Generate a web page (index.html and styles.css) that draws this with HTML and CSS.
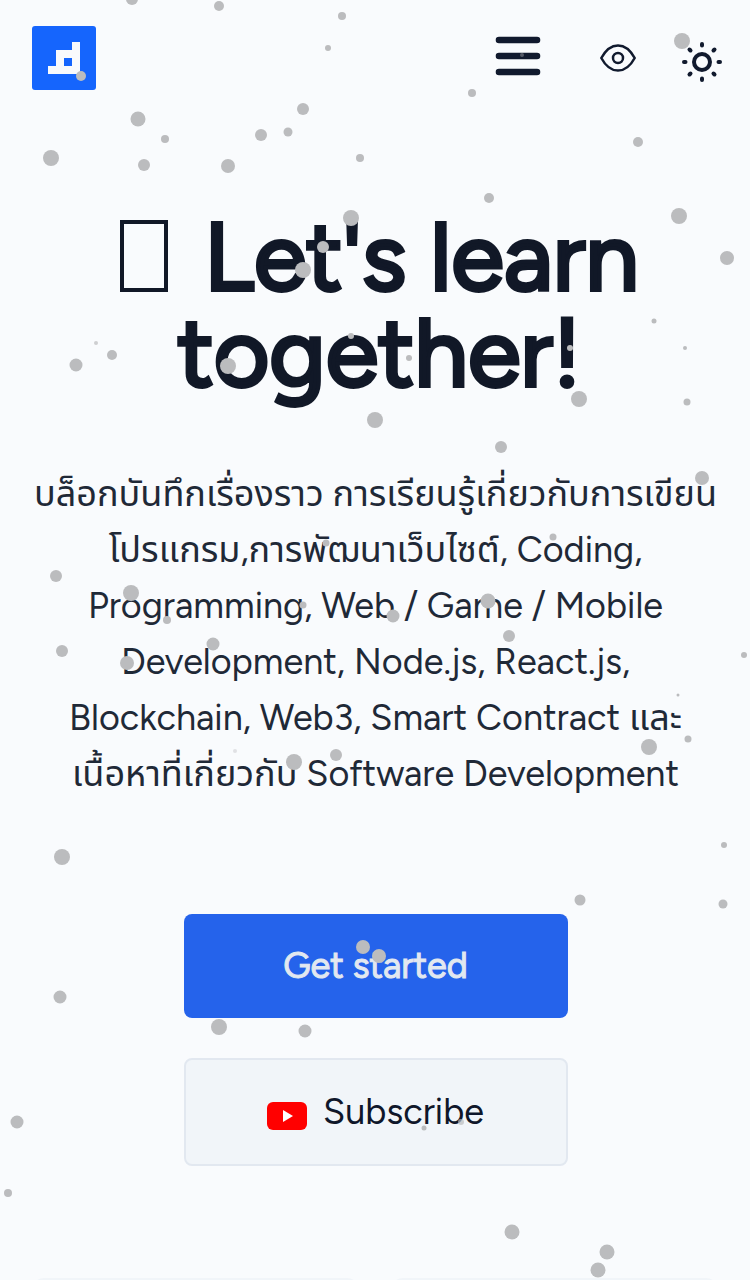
FILE: index.html
```html
<!DOCTYPE html>
<html lang="th">
<head>
<meta charset="utf-8">
<meta name="viewport" content="width=device-width, initial-scale=1">
<title>Let's learn together!</title>
<link rel="stylesheet" href="styles.css">
</head>
<body>
<header class="header">
  <a class="logo" href="#" aria-label="Home">
    <svg viewBox="0 0 64 64"><path fill="#f9fafc" fill-rule="evenodd" d="M40 16h8v32H16v-8h8V24h16zM32 32v8h8v-8z"/></svg>
  </a>
  <nav class="tools">
    <button class="tool tool-menu" type="button" aria-label="Menu">
      <svg class="icon-menu" viewBox="0 0 46 40"><path d="M4 4h38M4 20h38M4 36h38" stroke-width="6.6"/></svg>
    </button>
    <button class="tool" type="button" aria-label="View">
      <svg class="icon-eye" viewBox="0 0 36 28"><path d="M1.3 14C4 9 9 1.4 18 1.4S32 9 34.7 14C32 19 27 26.600 18 26.600S4 19 1.300 14z" stroke-width="2.500"/><circle cx="18" cy="14" r="5" stroke-width="2.500"/></svg>
    </button>
    <button class="tool tool-sun" type="button" aria-label="Theme">
      <svg class="icon-sun" viewBox="0 0 40 40"><circle cx="20" cy="20" r="8" stroke-width="4"/><path stroke-width="4" d="M20 2v1.500M20 36.500V38M2 20h1.500M36.500 20H38M7.500 7.500l1 1M31.500 31.500l1 1M7.500 32.500l1-1M31.500 8.500l1-1"/></svg>
    </button>
  </nav>
</header>
<main>
  <section class="hero">
    <h1 class="title"><span class="glyph-box"></span> Let's learn<br>together!</h1>
    <p class="lead">บล็อกบันทึกเรื่องราว การเรียนรู้เกี่ยวกับการเขียน<br>โปรแกรม,การพัฒนาเว็บไซต์, Coding,<br>Programming, Web / Game / Mobile<br>Development, Node.js, React.js,<br>Blockchain, Web3, Smart Contract และ<br>เนื้อหาที่เกี่ยวกับ Software Development</p>
    <div class="actions">
      <a class="btn btn-primary" href="#">Get started</a>
      <a class="btn btn-secondary" href="#">
        <svg class="icon-youtube" viewBox="0 0 40 28"><rect width="40" height="28" rx="6" fill="#f00"/><path d="M16 8l10 6-10 6z" fill="#fff"/></svg>
        Subscribe
      </a>
    </div>
  </section>
  <section class="cards">
    <div class="card"></div>
    <div class="card"></div>
  </section>
</main>
<svg class="particles" aria-hidden="true">
  <circle cx="132" cy="-1" r="6"/><circle cx="219" cy="6" r="5"/><circle cx="342" cy="16" r="4"/><circle cx="328" cy="48" r="3"/>
  <circle cx="81" cy="76" r="5"/><circle cx="138" cy="119" r="7.500"/><circle cx="165" cy="139" r="4"/><circle cx="51" cy="158" r="8"/>
  <circle cx="144" cy="165" r="6"/><circle cx="228" cy="166" r="7"/><circle cx="261" cy="135" r="6"/><circle cx="288" cy="132" r="4.500"/>
  <circle cx="303" cy="109" r="6"/><circle cx="360" cy="158" r="4"/><circle cx="472" cy="93" r="4"/><circle cx="522" cy="55" r="2" opacity=".4"/>
  <circle cx="682" cy="41" r="8"/><circle cx="638" cy="142" r="5"/><circle cx="489" cy="198" r="5"/><circle cx="679" cy="216" r="8"/>
  <circle cx="727" cy="258" r="7"/><circle cx="351" cy="218" r="8"/><circle cx="323" cy="247" r="6"/><circle cx="303" cy="270" r="8"/>
  <circle cx="654" cy="321" r="2.500"/><circle cx="685" cy="348" r="2"/><circle cx="687" cy="402" r="3.500"/><circle cx="579" cy="399" r="8"/>
  <circle cx="570" cy="348" r="3"/><circle cx="409" cy="358" r="3"/><circle cx="351" cy="336" r="3"/><circle cx="228" cy="366" r="8"/>
  <circle cx="112" cy="355" r="5"/><circle cx="96" cy="343" r="2" opacity=".7"/><circle cx="76" cy="365" r="6.500"/><circle cx="375" cy="420" r="8"/>
  <circle cx="501" cy="447" r="6"/><circle cx="702" cy="478" r="7"/><circle cx="553" cy="537" r="3.500"/><circle cx="326" cy="543" r="3.500"/>
  <circle cx="56" cy="576" r="6"/><circle cx="131" cy="593" r="8"/><circle cx="167" cy="620" r="4"/><circle cx="303" cy="605" r="3.500"/>
  <circle cx="393" cy="616" r="6.500"/><circle cx="488" cy="601" r="7.500"/><circle cx="509" cy="636" r="6"/><circle cx="213" cy="644" r="6.500"/>
  <circle cx="62" cy="651" r="6"/><circle cx="127" cy="663" r="7"/><circle cx="744" cy="655" r="3"/><circle cx="678" cy="695" r="1.500"/>
  <circle cx="688" cy="739" r="3.500"/><circle cx="649" cy="747" r="8"/><circle cx="235" cy="751" r="2" opacity=".4"/><circle cx="336" cy="755" r="6"/>
  <circle cx="294" cy="762" r="8"/><circle cx="62" cy="857" r="8"/><circle cx="724" cy="845" r="3"/><circle cx="580" cy="900" r="5.500"/>
  <circle cx="723" cy="904" r="4.500"/><circle cx="363" cy="947" r="7"/><circle cx="379" cy="956" r="7"/><circle cx="60" cy="997" r="6.500"/>
  <circle cx="219" cy="1027" r="8"/><circle cx="305" cy="1031" r="6.500"/><circle cx="424" cy="1128" r="2.500"/><circle cx="461" cy="1122" r="3" opacity=".7"/>
  <circle cx="17" cy="1122" r="6.500"/><circle cx="8" cy="1193" r="4"/><circle cx="512" cy="1232" r="7.500"/><circle cx="607" cy="1252" r="7.500"/><circle cx="598" cy="1270" r="7.500"/>
</svg>
</body>
</html>
```
FILE: styles.css
```css
* { box-sizing: border-box; }
body {
  margin: 0;
  height: 100vh;
  position: relative;
  overflow: hidden;
  background: #f9fbfd;
  color: #111827;
  font-family: Figtree, Lato, "Noto Sans Thai", "Noto Sans", sans-serif;
}
.header {
  display: flex;
  justify-content: space-between;
  align-items: center;
  padding: 26px 28px 26px 32px;
}
.logo { width: 64px; height: 64px; border-radius: 3px; background: #1565fd; }
.tools { display: flex; align-items: center; gap: 59px; }
.tool { display: flex; padding: 0; border: 0; background: none; color: #111a2e; }
.tool-menu { margin-bottom: 4px; }
.tool-sun { margin: 8px 0 0 -13px; }
svg { display: block; }
.tool svg { fill: none; stroke: currentColor; stroke-linecap: round; stroke-linejoin: round; }
.icon-menu { width: 46px; height: 40px; }
.icon-eye { width: 36px; height: 28px; }
.icon-sun { width: 40px; height: 40px; }
.hero {
  display: flex;
  flex-direction: column;
  align-items: center;
  padding: 93px 31px 112px 32px;
  text-align: center;
}
.title { margin: 0; padding-left: 8px; font-size: 96px; line-height: 96px; font-weight: 400; -webkit-text-stroke: 4px; }
.glyph-box { display: inline-block; width: 48px; height: 72px; margin-right: 12px; border: 4px solid; vertical-align: -2px; }
.lead { margin: 65px 0 0; color: #1f2937; font-size: 36px; line-height: 56px; white-space: nowrap; }
.actions { display: flex; flex-direction: column; gap: 40px; width: 384px; margin-top: 112px; }
.btn {
  display: flex;
  align-items: center;
  justify-content: center;
  gap: 16px;
  padding: 24px;
  border-radius: 8px;
  font-size: 36px;
  line-height: 56px;
  text-decoration: none;
}
.btn-primary { background: #2563eb; color: #e2e8f0; -webkit-text-stroke: 1px; }
.btn-secondary { border: 2px solid #e2e8f0; background: #f1f5f9; color: #0f172a; }
.icon-youtube { width: 40px; height: 28px; margin-top: 8px; }
.cards { display: grid; grid-template-columns: 1fr 1fr; gap: 32px; padding: 0 32px; }
.card { height: 160px; border-radius: 12px; background: #f1f5f9; }
.particles { position: absolute; inset: 0; width: 100%; height: 100%; fill: #bbbcbe; pointer-events: none; }
```
